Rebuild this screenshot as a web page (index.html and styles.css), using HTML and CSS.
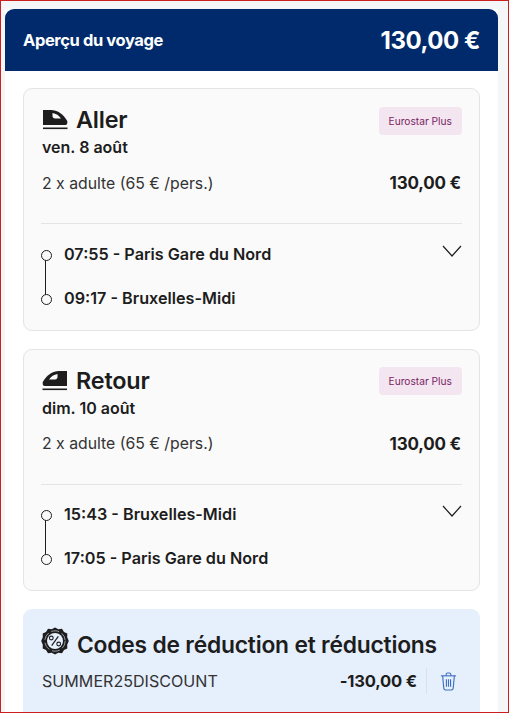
FILE: index.html
```html
<!DOCTYPE html>
<html lang="fr">
<head>
<meta charset="utf-8">
<title>Aperçu du voyage</title>
<link rel="stylesheet" href="styles.css">
</head>
<body>
<div class="window">
  <main class="summary">
    <header class="summary-head">
      <h1 class="summary-title">Aperçu du voyage</h1>
      <div class="summary-total">130,00 €</div>
    </header>
    <div class="summary-body">
      <section class="card">
        <div class="card-top">
          <div class="leg-title">
            <svg class="train" viewBox="0 0 26 20" aria-hidden="true"><path d="M1 0H9C15 0 21 4 25 10.500C25.600 12 25.500 15 23.500 15H1Z" fill="#1d1d1d"/><path d="M10.500 3C14 3.500 17 5.500 19 8.500H13C11.500 8.500 10.500 7.500 10.500 6Z" fill="#fafafa"/><rect x="1" y="17.500" width="24.500" height="1.600" fill="#1d1d1d"/></svg>
            <h2 class="leg-name">Aller</h2>
          </div>
          <span class="badge">Eurostar Plus</span>
        </div>
        <div class="leg-date">ven. 8 août</div>
        <div class="price-row">
          <span class="price-label">2 x adulte (65 € /pers.)</span>
          <span class="price-value">130,00 €</span>
        </div>
        <div class="stops">
          <div class="stop-list">
            <div class="stop">07:55 - Paris Gare du Nord</div>
            <div class="stop">09:17 - Bruxelles-Midi</div>
          </div>
          <svg class="chevron" viewBox="0 0 20 12" aria-hidden="true"><path d="M1 1L10 11L19 1" fill="none" stroke="#1d1d1d" stroke-width="1.200"/></svg>
        </div>
      </section>
      <section class="card">
        <div class="card-top">
          <div class="leg-title">
            <svg class="train" viewBox="0 0 26 20" aria-hidden="true"><path d="M25 0H17C11 0 5 4 1 10.500C.4 12 .5 15 2.500 15H25Z" fill="#1d1d1d"/><path d="M15.500 3C12 3.500 9 5.500 7 8.500H13C14.500 8.500 15.500 7.500 15.500 6Z" fill="#fafafa"/><rect x=".5" y="17.500" width="24.500" height="1.600" fill="#1d1d1d"/></svg>
            <h2 class="leg-name">Retour</h2>
          </div>
          <span class="badge">Eurostar Plus</span>
        </div>
        <div class="leg-date">dim. 10 août</div>
        <div class="price-row">
          <span class="price-label">2 x adulte (65 € /pers.)</span>
          <span class="price-value">130,00 €</span>
        </div>
        <div class="stops">
          <div class="stop-list">
            <div class="stop">15:43 - Bruxelles-Midi</div>
            <div class="stop">17:05 - Paris Gare du Nord</div>
          </div>
          <svg class="chevron" viewBox="0 0 20 12" aria-hidden="true"><path d="M1 1L10 11L19 1" fill="none" stroke="#1d1d1d" stroke-width="1.200"/></svg>
        </div>
      </section>
      <section class="card card-discount">
        <div class="discount-title">
          <svg class="percent" viewBox="0 0 28 28" aria-hidden="true"><path d="M14 .5L17.300 2.200L21 1.800L23 4.900L26.300 6.500L26.200 10.300L27.800 14L26.200 17.700L26.300 21.500L23 23.100L21 26.200L17.300 25.800L14 27.500L10.700 25.800L7 26.200L5 23.100L1.700 21.500L1.800 17.700L.2 14L1.800 10.300L1.700 6.500L5 4.900L7 1.800L10.700 2.200Z" fill="#1d1d1d"/><circle cx="14" cy="14" r="8" fill="#e6effc"/><circle cx="14" cy="14" r="10.200" fill="none" stroke="#e6effc" stroke-width=".6" stroke-dasharray="8 3"/><path d="M17.300 9.300L10.700 18.700" stroke="#1d1d1d" stroke-width="1.200"/><circle cx="10.300" cy="11" r="1.900" fill="none" stroke="#1d1d1d" stroke-width="1.100"/><circle cx="17.700" cy="17" r="1.900" fill="none" stroke="#1d1d1d" stroke-width="1.100"/></svg>
          <h2 class="discount-name">Codes de réduction et réductions</h2>
        </div>
        <div class="discount-row">
          <span class="discount-code">SUMMER25DISCOUNT</span>
          <div class="discount-actions">
            <span class="price-value discount-value">-130,00 €</span>
            <span class="divider"></span>
            <svg class="trash" viewBox="0 0 18 20" aria-hidden="true"><g fill="none" stroke="#3f6fc4" stroke-width="1.200"><path d="M1 4H17"/><path d="M6.500 4V2.500C6.500 1.500 7 1 8 1H10C11 1 11.500 1.500 11.500 2.500V4"/><path d="M2.800 4L4 17C4.100 18.200 4.800 19 6 19H12C13.200 19 13.900 18.200 14 17L15.200 4"/><path d="M6.800 7.500V15.500M9 7.500V15.500M11.200 7.500V15.500"/></g></svg>
          </div>
        </div>
      </section>
    </div>
  </main>
</div>
</body>
</html>
```
FILE: styles.css
```css
* { box-sizing: border-box; }
html, body { margin: 0; padding: 0; }
body {
  font-family: Inter, "Liberation Sans", sans-serif;
  color: #1d1d1d;
  overflow: hidden;
}
h1, h2 { margin: 0; }
.window {
  width: 509px;
  height: 713px;
  border: 1px solid #cc1f1f;
  background: #f5f6f7;
  padding: 8px 0 0 4px;
  overflow: hidden;
}
.summary {
  width: 493px;
  background: #fff;
}
.summary-head {
  height: 62px;
  background: #002a6b;
  border-radius: 9px 9px 0 0;
  color: #fff;
  display: flex;
  align-items: center;
  justify-content: space-between;
  padding: 0 18px;
}
.summary-title {
  font-size: 16.500px;
  font-weight: 700;
  letter-spacing: -0.4px;
}
.summary-total {
  font-size: 24px;
  font-weight: 700;
  letter-spacing: -0.45px;
}
.summary-body {
  padding: 17px 18px 0;
  display: flex;
  flex-direction: column;
  gap: 18px;
}
.card {
  background: #fafafa;
  border: 1px solid #e4e4e4;
  border-radius: 9px;
  padding: 17.600px 17px 0;
  height: 242.500px;
}
.card-top {
  display: flex;
  justify-content: space-between;
  align-items: flex-start;
  padding-left: 1px;
}
.leg-title {
  display: flex;
  align-items: center;
  gap: 8px;
  height: 26px;
}
.train {
  width: 26px;
  height: 20px;
  margin-top: 1px;
}
.leg-name {
  font-size: 23.400px;
  font-weight: 600;
  letter-spacing: -0.2px;
}
.badge {
  height: 28px;
  padding: 0 10px;
  display: flex;
  align-items: center;
  background: #f3e6f0;
  border-radius: 4px;
  color: #7a1f63;
  font-size: 10.200px;
}
.leg-date {
  font-size: 16px;
  font-weight: 600;
  line-height: 18px;
  margin-top: 3.800px;
  padding-left: 1px;
}
.price-row {
  display: flex;
  justify-content: space-between;
  align-items: center;
  margin-top: 16px;
  height: 22px;
  padding: 0 1px;
}
.price-label {
  font-size: 15.800px;
  font-weight: 400;
  color: #333;
}
.price-value {
  font-size: 17px;
  font-weight: 700;
  letter-spacing: -0.2px;
}
.stops {
  border-top: 1px solid #e4e4e4;
  margin-top: 29px;
  padding-top: 18.600px;
  display: flex;
  justify-content: space-between;
  align-items: flex-start;
}
.stop-list {
  display: flex;
  flex-direction: column;
  gap: 22px;
  position: relative;
  margin-left: -0.500px;
}
.stop {
  position: relative;
  padding-left: 23.500px;
  font-size: 16.200px;
  font-weight: 600;
  line-height: 22px;
}
.stop::before {
  content: "";
  position: absolute;
  left: 0;
  top: 7px;
  width: 9px;
  height: 9px;
  border: 1px solid #1d1d1d;
  border-radius: 50%;
  background: #fafafa;
  z-index: 1;
}
.stop-list::before {
  content: "";
  position: absolute;
  left: 4px;
  top: 15px;
  width: 1px;
  height: 38px;
  background: #1d1d1d;
}
.chevron {
  width: 20px;
  height: 12px;
  margin-top: 2px;
}
.card-discount {
  background: #e6effc;
  border-color: #e6effc;
  padding-top: 20px;
}
.discount-title {
  display: flex;
  align-items: center;
  gap: 8px;
}
.percent {
  width: 28px;
  height: 28px;
  margin-top: -9px;
}
.discount-name {
  font-size: 22.800px;
  font-weight: 600;
  letter-spacing: -0.2px;
  line-height: 30px;
}
.discount-row {
  display: flex;
  justify-content: space-between;
  align-items: center;
  margin-top: 7px;
  height: 28px;
  padding: 0 5px 0 1px;
}
.discount-code {
  font-size: 16.100px;
  color: #333;
}
.discount-actions {
  display: flex;
  align-items: center;
  gap: 9px;
}
.discount-value {
  font-size: 16.600px;
}
.divider {
  width: 1px;
  height: 26px;
  background: #d6e0ee;
}
.trash {
  width: 17px;
  height: 19px;
  margin-left: 4px;
}
```
